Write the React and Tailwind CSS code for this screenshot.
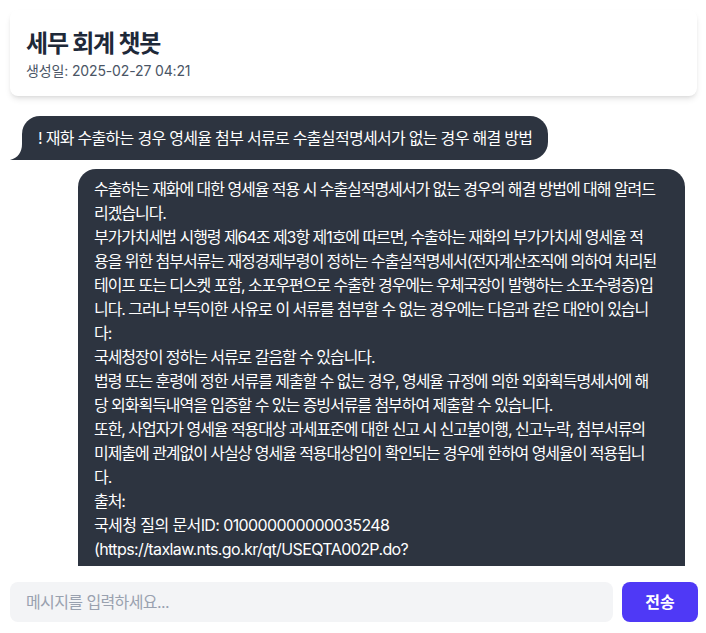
import { useState } from 'react';

const QUESTION = '! 재화 수출하는 경우 영세율 첨부 서류로 수출실적명세서가 없는 경우 해결 방법';

// Answer text, broken into the lines the bubble shows
const ANSWER_LINES = [
  '수출하는 재화에 대한 영세율 적용 시 수출실적명세서가 없는 경우의 해결 방법에 대해 알려드',
  '리겠습니다.',
  '부가가치세법 시행령 제64조 제3항 제1호에 따르면, 수출하는 재화의 부가가치세 영세율 적',
  '용을 위한 첨부서류는 재정경제부령이 정하는 수출실적명세서(전자계산조직에 의하여 처리된',
  '테이프 또는 디스켓 포함, 소포우편으로 수출한 경우에는 우체국장이 발행하는 소포수령증)입',
  '니다. 그러나 부득이한 사유로 이 서류를 첨부할 수 없는 경우에는 다음과 같은 대안이 있습니',
  '다:',
  '국세청장이 정하는 서류로 갈음할 수 있습니다.',
  '법령 또는 훈령에 정한 서류를 제출할 수 없는 경우, 영세율 규정에 의한 외화획득명세서에 해',
  '당 외화획득내역을 입증할 수 있는 증빙서류를 첨부하여 제출할 수 있습니다.',
  '또한, 사업자가 영세율 적용대상 과세표준에 대한 신고 시 신고불이행, 신고누락, 첨부서류의',
  '미제출에 관계없이 사실상 영세율 적용대상임이 확인되는 경우에 한하여 영세율이 적용됩니',
  '다.',
  '출처:',
];

const SOURCE_LINES = [
  '국세청 질의 문서ID: 010000000000035248',
  '(https://taxlaw.nts.go.kr/qt/USEQTA002P.do?',
  'ntstDcmId=010000000000035248)',
];

/**
 * Tax & accounting chatbot: header card, message list, input bar.
 */
export default function App() {
  const [text, setText] = useState('');

  return (
    <div
      className="h-screen flex flex-col bg-white pl-2.5 pr-2 pt-2.5 pb-[11px] text-[#1f2937]"
      style={{ fontFamily: 'Inter, "Noto Sans CJK KR", sans-serif' }}
    >
      {/* Header */}
      <div className="rounded-lg bg-white shadow-md px-4 pt-[18px] pb-[15px] mr-px">
        <h1 className="text-2xl font-bold leading-8 tracking-[-0.05em] text-gray-800">세무 회계 챗봇</h1>
        <p className="mt-px text-sm text-gray-600 tracking-[-0.01em]">생성일: 2025-02-27 04:21</p>
      </div>

      {/* Messages */}
      <div className="flex-1 min-h-0 overflow-hidden mt-5 pl-3 pr-3">
        <div className="flex">
          <div className="relative rounded-[18px] rounded-bl-none bg-[#2d3440] px-4 py-2.5 text-white leading-6 tracking-[-0.7px]">
            <svg
              className="absolute -left-3 bottom-0"
              width="14"
              height="16"
              viewBox="0 0 14 16"
            >
              <path d="M12 0 C12 8 8 14 0 16 L14 16 L14 0 Z" fill="#2d3440" />
            </svg>
            {QUESTION}
          </div>
        </div>

        <div className="mt-[9px] ml-14 mr-[1px] rounded-[18px] bg-[#2d3440] px-4 pt-2 pb-3 text-white leading-6">
          {ANSWER_LINES.map((line, i) => (
            <div key={i} className="whitespace-nowrap tracking-[-1.05px]">{line}</div>
          ))}
          {SOURCE_LINES.map((line, i) => (
            <div key={i} className="whitespace-nowrap tracking-[-0.6px]">{line}</div>
          ))}
        </div>
      </div>

      {/* Input */}
      <div className="flex gap-[9px] mt-4">
        <input
          value={text}
          onChange={(e) => setText(e.target.value)}
          placeholder="메시지를 입력하세요..."
          className="flex-1 h-10 rounded-lg bg-gray-100 px-4 text-base tracking-[-0.6px] placeholder:text-gray-400 focus:outline-none"
        />
        <button className="h-10 w-[76px] rounded-lg bg-indigo-600 text-white font-semibold">
          전송
        </button>
      </div>
    </div>
  );
}
